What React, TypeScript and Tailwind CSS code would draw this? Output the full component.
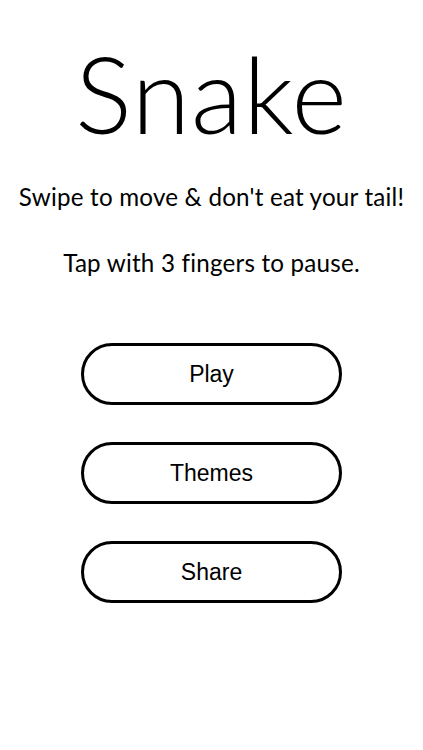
import React from 'react'

const buttons = ['Play', 'Themes', 'Share']

const App = () => {
  return (
    <div className="flex h-[750px] w-[423px] flex-col items-center bg-white text-black">
      <h1 className="mt-[38px] h-[110px] font-['Lato',sans-serif] text-[106px] font-light leading-[110px] tracking-[1px]">
        Snake
      </h1>
      <p className="mt-[34px] font-['Lato',sans-serif] text-[24.2px] leading-[30px] tracking-[0.2px]">
        Swipe to move &amp; don&apos;t eat your tail!
      </p>
      <p className="mt-[36px] font-['Lato',sans-serif] text-[24.2px] leading-[30px] tracking-[0.2px]">
        Tap with 3 fingers to pause.
      </p>
      <div className="mt-[65px] flex flex-col gap-[37px]">
        {buttons.map((label) => (
          <button
            key={label}
            type="button"
            className="flex h-[62px] w-[261px] items-center justify-center rounded-full border-[3px] border-black font-['Liberation_Sans',Arial,sans-serif] text-[23px]"
          >
            {label}
          </button>
        ))}
      </div>
    </div>
  )
}

export default App
